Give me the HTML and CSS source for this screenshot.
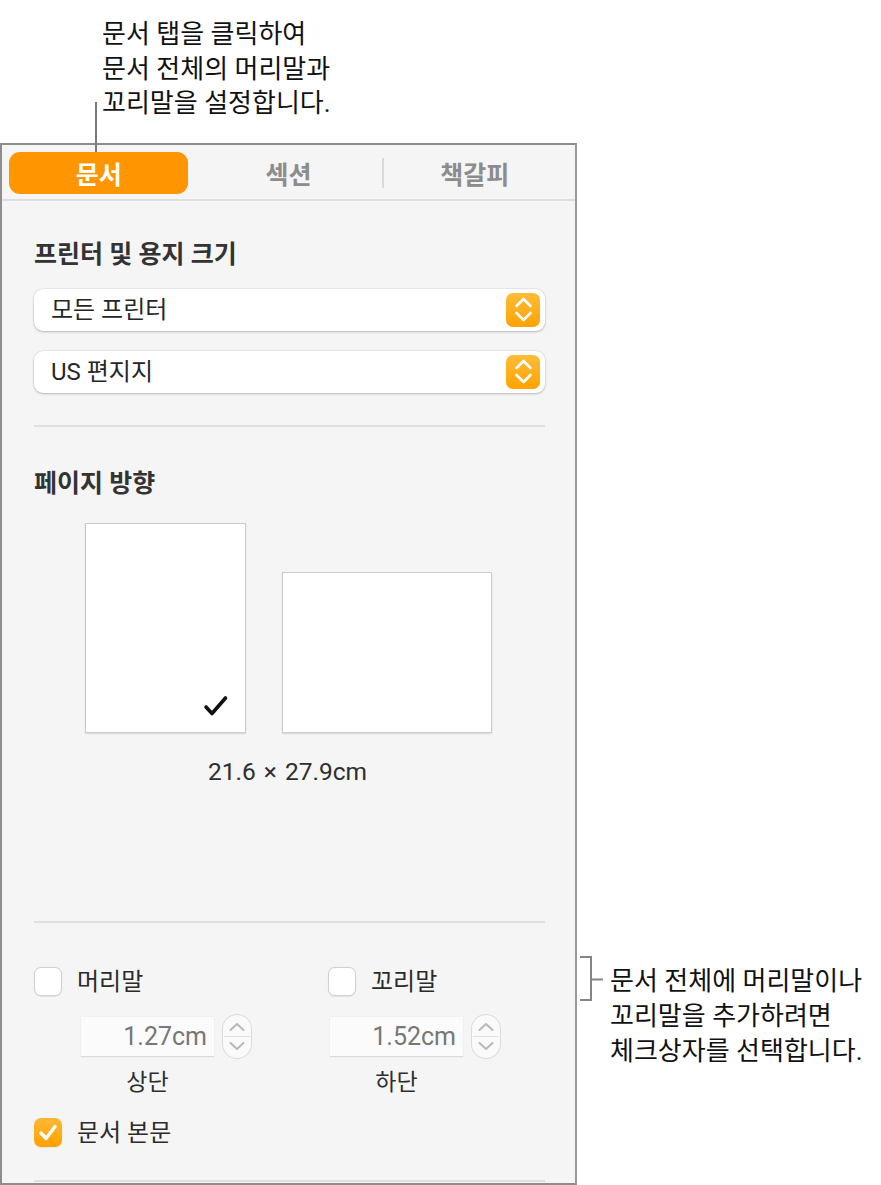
FILE: index.html
```html
<!DOCTYPE html>
<html>
<head>
<meta charset="utf-8">
<title>문서 설정</title>
<link rel="stylesheet" href="styles.css">
</head>
<body>

<div class="page">
  <div class="note-top">
    <p class="note-text">문서 탭을 클릭하여<br>문서 전체의 머리말과<br>꼬리말을 설정합니다.</p>
    <span class="leader"></span>
  </div>

  <div class="inspector">
    <div class="tabs">
      <div class="tab is-active">문서</div>
      <div class="tab">섹션</div>
      <div class="tab tab-split">책갈피</div>
    </div>

    <div class="pane">
      <h3 class="pane-title title-printer">프린터 및 용지 크기</h3>
      <div class="popup popup-first">
        <span class="popup-label">모든 프린터</span>
        <span class="popup-arrows"><svg width="34" height="34" viewBox="0 0 34 34"><path d="M10.5 13 L17.5 6 L24.5 13 M10.5 20 L17.5 27 L24.5 20" fill="none" stroke="#fff" stroke-width="2.6" stroke-linecap="round" stroke-linejoin="round"/></svg></span>
      </div>
      <div class="popup popup-second">
        <span class="popup-label">US 편지지</span>
        <span class="popup-arrows"><svg width="34" height="34" viewBox="0 0 34 34"><path d="M10.5 13 L17.5 6 L24.5 13 M10.5 20 L17.5 27 L24.5 20" fill="none" stroke="#fff" stroke-width="2.6" stroke-linecap="round" stroke-linejoin="round"/></svg></span>
      </div>

      <hr class="rule rule-a">

      <h3 class="pane-title title-orient">페이지 방향</h3>
      <div class="orient">
        <div class="sheet sheet-portrait">
          <svg class="sheet-check" width="26" height="24" viewBox="0 0 26 24"><path d="M3 13 L9 19.5 L22.5 4" fill="none" stroke="#111" stroke-width="3.6" stroke-linecap="round" stroke-linejoin="round"/></svg>
        </div>
        <div class="sheet sheet-landscape"></div>
      </div>
      <div class="sheet-size">21.6 × 27.9cm</div>

      <hr class="rule rule-b">

      <div class="hf-checks">
        <div class="check-row">
          <span class="box"></span>
          <span class="check-label">머리말</span>
        </div>
        <div class="check-row">
          <span class="box"></span>
          <span class="check-label">꼬리말</span>
        </div>
      </div>

      <div class="hf-margins">
        <div class="unit">
          <div class="field">1.27cm</div>
          <div class="stepper"><svg width="28" height="43" viewBox="0 0 28 43"><path d="M7.5 15 L14 9 L20.5 15 M7.5 28 L14 34 L20.5 28" fill="none" stroke="#b8b8b8" stroke-width="2" stroke-linecap="round" stroke-linejoin="round"/><path d="M1 21.5 H27" stroke="#e0e0e0" stroke-width="1"/></svg></div>
          <div class="unit-label">상단</div>
        </div>
        <div class="unit">
          <div class="field">1.52cm</div>
          <div class="stepper"><svg width="28" height="43" viewBox="0 0 28 43"><path d="M7.5 15 L14 9 L20.5 15 M7.5 28 L14 34 L20.5 28" fill="none" stroke="#b8b8b8" stroke-width="2" stroke-linecap="round" stroke-linejoin="round"/><path d="M1 21.5 H27" stroke="#e0e0e0" stroke-width="1"/></svg></div>
          <div class="unit-label">하단</div>
        </div>
      </div>

      <div class="check-row body-check">
        <span class="box box-on"><svg width="28" height="29" viewBox="0 0 28 29"><path d="M7 15 L12 20.5 L21 8.5" fill="none" stroke="#fff" stroke-width="3.4" stroke-linecap="round" stroke-linejoin="round"/></svg></span>
        <span class="check-label">문서 본문</span>
      </div>

      <hr class="rule rule-c">
    </div>
  </div>

  <div class="note-side">
    <svg class="bracket" width="24" height="46" viewBox="0 0 24 46"><path d="M0 1 H11 V44 H0 M11 23.5 H23" fill="none" stroke="#858585" stroke-width="2"/></svg>
    <p class="note-text side-text">문서 전체에 머리말이나<br>꼬리말을 추가하려면<br>체크상자를 선택합니다.</p>
  </div>
</div>

</body>
</html>
```

FILE: styles.css
```css
body { margin: 0; background: #fff; font-family: "Roboto", "Noto Sans CJK KR", sans-serif; color: #2b2b2b; }

.page { position: relative; width: 881px; height: 1185px; overflow: hidden; }

/* callouts */
.note-top { height: 143px; box-sizing: border-box; padding: 17px 0 0 102px; }
.note-text { margin: 0; font-size: 26px; line-height: 34.5px; color: #111; }
.leader { position: absolute; left: 95px; top: 102px; width: 2px; height: 50px; background: #7b7b7b; }

.note-side { position: absolute; left: 580px; top: 956px; display: flex; align-items: flex-start; }
.bracket { display: block; flex: none; }
.side-text { margin: 8px 0 0 6px; line-height: 35px; }

/* inspector panel */
.inspector { width: 577px; height: 1042px; box-sizing: border-box; border: 2px solid #8d8d8d; border-right-color: #999; background: #f5f5f5; overflow: hidden; }

.tabs { height: 56px; box-sizing: border-box; padding: 7px 7px 0; display: grid; grid-template-columns: 1fr 1fr 1fr; align-items: start; border-bottom: 2px solid #dedede; }
.tab { height: 42px; display: flex; align-items: center; justify-content: center; font-size: 25px; font-weight: bold; color: #8c8c8c; }
.tab.is-active { margin-right: 7px; background: #ff9500; color: #fff; border-radius: 11px; }
.tab-split { background: linear-gradient(#d9d9d9, #d9d9d9) left center / 2px 30px no-repeat; }

.pane { display: flex; flex-direction: column; padding: 0 30px 0 32px; }

.pane-title { margin: 0; font-size: 25px; line-height: 30px; font-weight: bold; color: #333; }
.title-printer { margin-top: 39px; }
.title-orient { margin-top: 42px; }

.popup { height: 42px; box-sizing: border-box; display: flex; align-items: center; justify-content: space-between; padding: 0 5px 0 17px; background: #fff; border-radius: 9px; box-shadow: 0 0 0 0.5px rgba(0,0,0,0.08), 0 1px 2.5px rgba(0,0,0,0.22); }
.popup-first { margin-top: 19px; }
.popup-second { margin-top: 20px; }
.popup-label { font-size: 24px; line-height: 30px; color: #262626; }
.popup-arrows { width: 34px; height: 34px; border-radius: 7px; background: linear-gradient(#ffbc38, #ffa300); }
.popup-arrows svg { display: block; }

.rule { margin: 0; border: 0; height: 2px; background: #dfdfdf; }
.rule-a { margin-top: 32px; }
.rule-b { margin-top: 134px; }
.rule-c { margin-top: 33px; }

.orient { margin-top: 24px; display: flex; justify-content: center; align-items: flex-end; gap: 36px; padding-right: 2px; }
.sheet { box-sizing: border-box; background: #fff; border: 1px solid #cbcbcb; box-shadow: 0 1px 1.5px rgba(0,0,0,0.12); }
.sheet-portrait { width: 161px; height: 210px; display: flex; justify-content: flex-end; align-items: flex-end; padding: 0 16px 14px 0; }
.sheet-landscape { width: 210px; height: 161px; }
.sheet-check { display: block; }

.sheet-size { margin-top: 24px; font-size: 24.5px; line-height: 30px; text-align: center; color: #2e2e2e; padding-right: 4px; word-spacing: 2px; }

.hf-checks { margin-top: 44px; display: grid; grid-template-columns: 294px 1fr; }
.check-row { display: flex; align-items: center; gap: 15px; height: 29px; }
.box { width: 28px; height: 29px; box-sizing: border-box; border-radius: 7px; background: #fff; border: 1px solid #d0d0d0; box-shadow: 0 0.5px 1px rgba(0,0,0,0.08); }
.box-on { border: 0; background: linear-gradient(#ffb835, #ffa200); }
.box-on svg { display: block; }
.check-label { font-size: 24px; line-height: 30px; color: #2b2b2b; }

.hf-margins { margin-top: 19px; display: flex; padding-left: 47px; gap: 79px; }
.unit { display: grid; grid-template-columns: 133px 28px; column-gap: 9px; row-gap: 12px; align-items: center; }
.field { height: 40px; box-sizing: border-box; padding-right: 7px; text-align: right; font-size: 25px; line-height: 40px; color: #777; background: #fbfbfb; border-bottom: 1px solid #dadada; box-shadow: 0 0 0 0.5px #ececec; }
.stepper { width: 28px; height: 43px; box-sizing: border-box; border-radius: 14px; background: #fafafa; box-shadow: 0 0 0 1px #dcdcdc, 0 1px 1px rgba(0,0,0,0.06); overflow: hidden; }
.stepper svg { display: block; }
.unit-label { grid-column: 1; font-size: 23px; line-height: 26px; text-align: center; color: #2e2e2e; }

.body-check { margin-top: 22px; }
```
